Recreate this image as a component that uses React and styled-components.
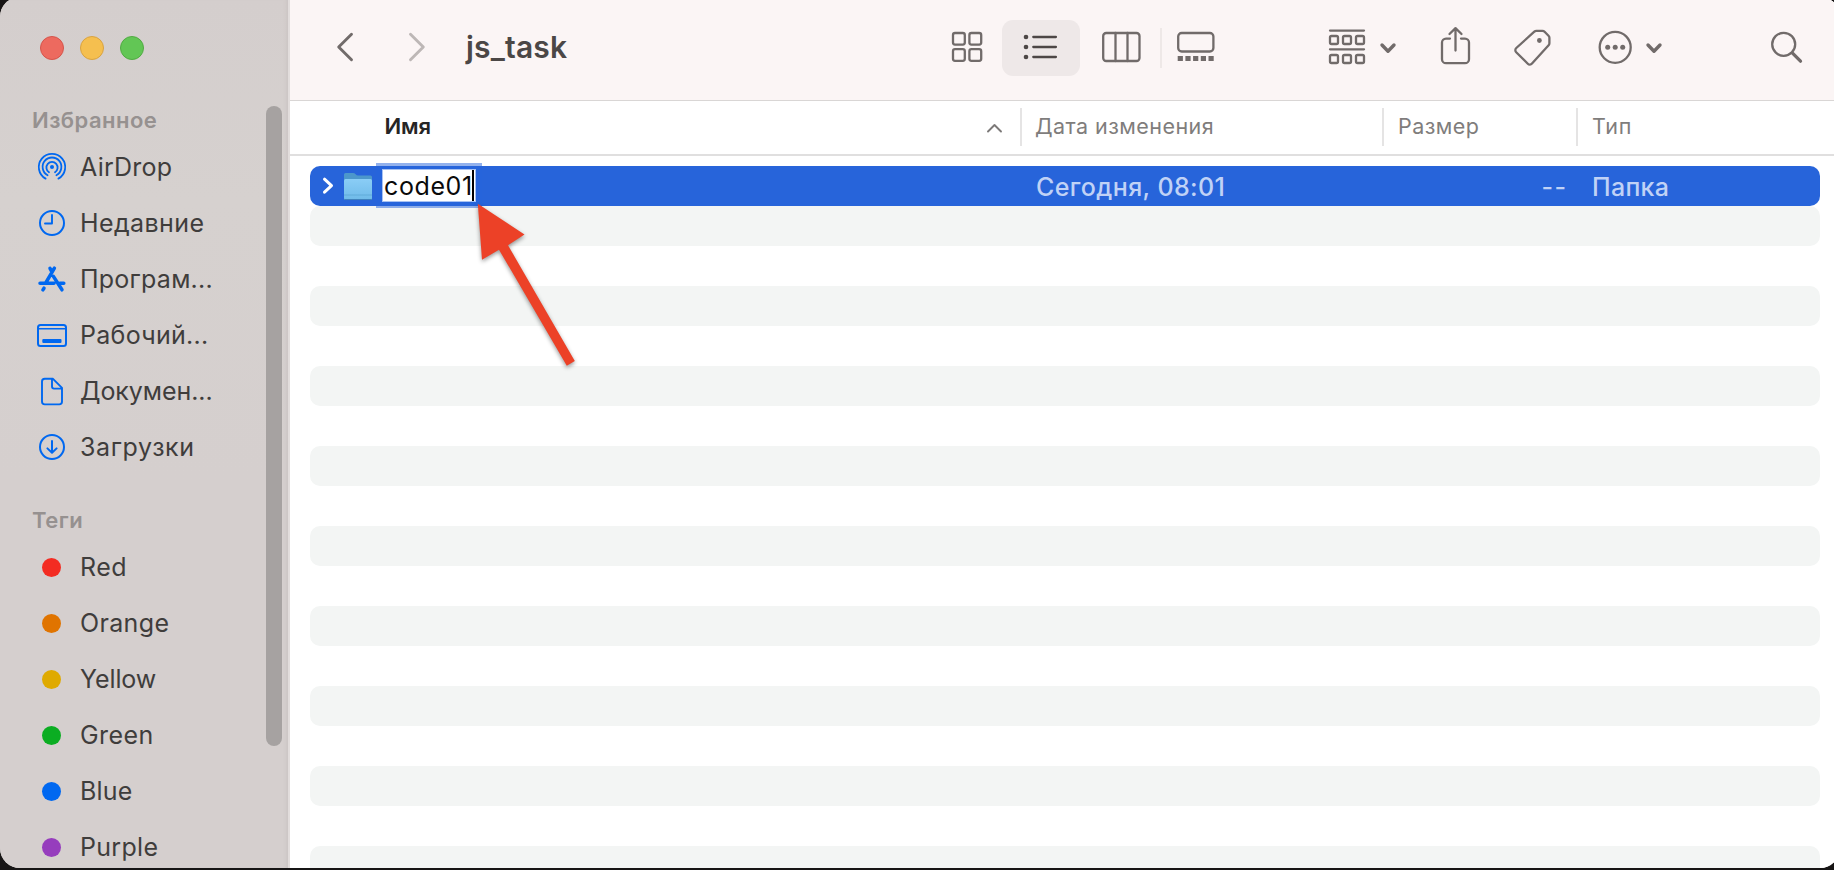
import React from 'react';
import styled, { createGlobalStyle } from 'styled-components';

const GlobalStyle = createGlobalStyle`
  * { box-sizing: border-box; }
  body { margin: 0; background: #171515; overflow: hidden; }
`;

const Desktop = styled.div`
  height: 870px;
  overflow: hidden;
  background: #171515;
  font-family: Inter, 'Liberation Sans', sans-serif;
`;

const Window = styled.div`
  display: flex;
  width: 1840px;
  height: 871px;
  margin-top: -3px;
  padding-top: 3px;
  border-radius: 20px;
  overflow: hidden;
  background: linear-gradient(90deg, #d5cfce 290px, #fbf5f5 290px);
`;

/* Sidebar */

const Sidebar = styled.aside`
  display: flex;
  justify-content: space-between;
  flex: 0 0 290px;
  height: 868px;
  overflow: hidden;
  background: linear-gradient(180deg, #d4cecd 0, #d6d1cf 200px, #d5cfce 480px, #d5cfce 100%);
  border-right: 2px solid #e2dddc;
  box-shadow: inset -4px 0 3px -2px #ccc6c5;
`;

const SidebarContent = styled.div`
  display: flex;
  flex-direction: column;
  width: 226px;
`;

const TrafficLights = styled.div`
  display: flex;
  gap: 16px;
  padding: 36px 0 41px 40px;
`;

const Light = styled.span`
  width: 24px;
  height: 24px;
  border-radius: 50%;
  background: ${(p) => p.$fill};
  border: 1px solid ${(p) => p.$edge};
`;

const Section = styled.section`
  display: flex;
  flex-direction: column;
  margin-bottom: 26px;
`;

const SectionTitle = styled.h2`
  margin: 0;
  padding-left: 32px;
  font-size: 22px;
  font-weight: 600;
  line-height: 38px;
  letter-spacing: 0.45px;
  color: #969190;
`;

const SidebarItem = styled.div`
  display: flex;
  align-items: center;
  height: 56px;
  padding-left: 32px;
  font-size: 25px;
  letter-spacing: ${(p) => p.$track}px;
  color: #3f3d3c;
  white-space: nowrap;
`;

const SidebarIcon = styled.svg`
  flex: none;
  width: 40px;
  height: 40px;
  margin-right: 8px;
  fill: none;
  stroke: #0068f0;
  stroke-width: 2;
  stroke-linecap: round;
  stroke-linejoin: round;
`;

const TagDot = styled.span`
  flex: none;
  width: 19px;
  height: 19px;
  margin: 0 19px 0 10px;
  border-radius: 50%;
  background: ${(p) => p.$color};
`;

const Scrollbar = styled.div`
  width: 16px;
  height: 640px;
  margin: 106px 6px 0 0;
  border-radius: 8px;
  background: #a6a2a1;
`;

/* Main pane */

const Main = styled.main`
  display: flex;
  flex-direction: column;
  flex: 1;
  height: 868px;
  overflow: hidden;
  background: #fff;
`;

const Toolbar = styled.header`
  display: flex;
  align-items: center;
  flex: 0 0 101px;
  background: #fbf5f5;
  border-bottom: 1px solid #d9d6d5;
`;

const NavButtons = styled.div`
  display: flex;
  gap: 40px;
  margin-left: 39px;
`;

const Title = styled.h1`
  width: 458px;
  margin: -6px 0 0 33px;
  font-size: 30px;
  font-weight: 600;
  letter-spacing: 0.2px;
  color: #4b4746;
`;

const ViewSwitch = styled.div`
  display: flex;
  align-items: center;
`;

const ViewButton = styled.div`
  display: flex;
  align-items: center;
  justify-content: center;
  width: 78px;
  height: 56px;
  margin-top: -4px;
  border-radius: 11px;
  background: ${(p) => (p.$selected ? '#eee8e8' : 'transparent')};
`;

const Separator = styled.div`
  width: 2px;
  height: 40px;
  margin: -4px 0 0 2px;
  background: #eee8e7;
`;

const Actions = styled.div`
  display: flex;
  align-items: center;
  margin-left: 89px;
`;

const Action = styled.div`
  display: flex;
  flex: none;
  gap: ${(p) => p.$gap || 0}px;
  width: ${(p) => p.$width}px;
`;

const Glyph = styled.svg`
  display: block;
  flex: none;
  width: ${(p) => p.$w}px;
  height: 50px;
  overflow: visible;
  fill: none;
  stroke: ${(p) => p.$color || '#716b6a'};
  stroke-width: 2.3;
  stroke-linecap: round;
  stroke-linejoin: round;
`;

const ListHeader = styled.div`
  display: grid;
  grid-template-columns: 730px 362px 194px 1fr;
  align-items: center;
  flex: 0 0 55px;
  border-bottom: 2px solid #e0dfdf;
  font-size: 21.5px;
  color: #7f7d7c;
`;

const NameHeading = styled.div`
  display: flex;
  align-items: center;
  justify-content: space-between;
  padding: 0 17px 3px 94.5px;
  font-size: 22px;
  font-weight: 600;
  letter-spacing: -0.1px;
  color: #262525;
`;

const Heading = styled.div`
  display: flex;
  align-items: center;
  height: 38px;
  margin-top: -1px;
  padding: 0 0 3px ${(p) => p.$left}px;
  border-left: 2px solid #e5e4e4;
  letter-spacing: ${(p) => p.$track}px;
`;

const SortCaret = styled.svg`
  width: 17px;
  height: 12px;
  margin-top: 4px;
  fill: none;
  stroke: #7c7978;
  stroke-width: 1.9;
  stroke-linecap: round;
  stroke-linejoin: round;
`;

const Rows = styled.div`
  display: flex;
  flex-direction: column;
  padding: 10px 20px 0;
`;

const Row = styled.div`
  flex: 0 0 40px;
  border-radius: 10px;
  background: ${(p) => (p.$striped ? '#f3f5f4' : 'transparent')};
`;

const SelectedRow = styled(Row)`
  display: grid;
  grid-template-columns: 710px 362px 194px 1fr;
  align-items: center;
  background: #2764da;
  color: #c0d2f6;
  font-size: 25px;
`;

const NameCell = styled.div`
  display: flex;
  align-items: center;
  height: 40px;
`;

const RowIcon = styled.svg`
  flex: none;
  width: ${(p) => p.$w}px;
  height: 40px;
`;

const NameField = styled.div`
  position: relative;
  display: flex;
  align-items: center;
  width: 94px;
  height: 33px;
  margin-top: -1px;
  padding-left: 1px;
  border: 1px solid #a8c2f2;
  background: #fff;
  box-shadow: 0 0 0 6px rgba(37, 99, 220, 0.5);
  color: #0a0a0a;
  letter-spacing: 0.6px;
`;

const Caret = styled.span`
  position: absolute;
  right: 1px;
  top: 0;
  width: 2px;
  height: 31px;
  background: #000;
`;

const Cell = styled.div`
  padding: 1px ${(p) => p.$right || 0}px 0 ${(p) => p.$left || 0}px;
  text-align: ${(p) => (p.$right ? 'right' : 'left')};
  font-weight: 450;
  letter-spacing: ${(p) => p.$track}px;
`;

const PointerArrow = styled.svg`
  position: absolute;
  left: 470px;
  top: 196px;
  width: 120px;
  height: 184px;
  filter: drop-shadow(0 2px 2px rgba(0, 0, 0, 0.4));
`;

const places = [
  {
    label: 'AirDrop', track: 0.25,
    icon: (
      <>
        <circle cx="20" cy="20" r="2" fill="#0068f0" stroke="none" />
        <path d="M17 25.2A5.6 5.6 0 1 1 23 25.2M15.6 28.2A9.4 9.4 0 1 1 24.4 28.2M13.6 31.6A13.2 13.2 0 1 1 26.4 31.6" strokeWidth="1.8" />
      </>
    ),
  },
  {
    label: 'Недавние', track: 0.42,
    icon: (
      <>
        <circle cx="20" cy="20" r="12" />
        <path d="M20 12v8.5h-7" strokeWidth="1.9" />
      </>
    ),
  },
  {
    label: 'Програм...', track: 0.23,
    icon: (
      <path d="M18 9.4L19.800 12.600M22.400 9.200L13.700 24M8 24.200H22M21.400 17.400L30 30.800M27.800 24.200H31.800M12 29.200L10.900 30.900" strokeWidth="3.5" />
    ),
  },
  {
    label: 'Рабочий...', track: 0.28,
    icon: (
      <>
        <rect x="6" y="10" width="28" height="21" rx="2.5" />
        <path d="M6 13.7h28" strokeWidth="1.6" />
        <rect x="10.3" y="24" width="19.2" height="4" rx="1" fill="#0068f0" stroke="none" />
      </>
    ),
  },
  {
    label: 'Докумен...', track: -0.07,
    icon: (
      <path d="M12.8 7.8h8.2l9 9v13.8a2.8 2.8 0 0 1-2.8 2.8H12.8a2.8 2.8 0 0 1-2.8-2.8V10.6a2.8 2.8 0 0 1 2.8-2.8zM20 8v7.6a2 2 0 0 0 2 2h7.6" strokeWidth="1.9" />
    ),
  },
  {
    label: 'Загрузки', track: 0.6,
    icon: (
      <>
        <circle cx="20" cy="20" r="12" />
        <path d="M20 14v11.5M15.4 21.4l4.6 4.4 4.6-4.4" />
      </>
    ),
  },
];

const tags = [
  ['Red', '#f32c22', 0.5],
  ['Orange', '#e07400', 0.35],
  ['Yellow', '#dfaa00', -0.1],
  ['Green', '#0bad22', 0.4],
  ['Blue', '#0068f0', 0.2],
  ['Purple', '#963dbd', 0.3],
];

const ChevronDown = () => (
  <Glyph $w={18} viewBox="0 25 18 50">
    <path d="M3 45l6 6.2 6-6.2" strokeWidth="3.4" />
  </Glyph>
);

export default function App() {
  return (
    <Desktop>
      <GlobalStyle />
      <Window>
        <Sidebar>
          <SidebarContent>
            <TrafficLights>
              <Light $fill="#ed6a5f" $edge="#d5554b" />
              <Light $fill="#f5bf4f" $edge="#d9a341" />
              <Light $fill="#62c655" $edge="#51ab43" />
            </TrafficLights>
            <Section>
              <SectionTitle>Избранное</SectionTitle>
              {places.map((p) => (
                <SidebarItem key={p.label} $track={p.track}>
                  <SidebarIcon viewBox="0 0 40 40">{p.icon}</SidebarIcon>
                  {p.label}
                </SidebarItem>
              ))}
            </Section>
            <Section>
              <SectionTitle>Теги</SectionTitle>
              {tags.map(([label, color, track]) => (
                <SidebarItem key={label} $track={track}>
                  <TagDot $color={color} />
                  {label}
                </SidebarItem>
              ))}
            </Section>
          </SidebarContent>
          <Scrollbar />
        </Sidebar>

        <Main>
          <Toolbar>
            <NavButtons>
              <Glyph $w={32} viewBox="329 25 32 50">
                <path d="M351.5 34.3L338.7 47l12.8 12.7" strokeWidth="2.9" />
              </Glyph>
              <Glyph $w={32} $color="#bdb7b6" viewBox="401 25 32 50">
                <path d="M410.5 34.3L423.3 47l-12.8 12.7" strokeWidth="2.9" />
              </Glyph>
            </NavButtons>
            <Title>js_task</Title>
            <ViewSwitch>
              <ViewButton>
                <Glyph $w={32} viewBox="947 23 32 50">
                  <rect x="953" y="33" width="11.8" height="11.600" rx="2" />
                  <rect x="969.4" y="33" width="11.8" height="11.600" rx="2" />
                  <rect x="953" y="49.2" width="11.8" height="11.600" rx="2" />
                  <rect x="969.4" y="49.2" width="11.8" height="11.600" rx="2" />
                </Glyph>
              </ViewButton>
              <ViewButton $selected>
                <Glyph $w={34} $color="#4d4746" viewBox="1024 23 34 50">
                  <path d="M1033.3 37h22.6M1033.3 47h22.6M1033.3 57h22.6" />
                  <g fill="#4d4746" stroke="none">
                    <circle cx="1026" cy="37" r="2.3" />
                    <circle cx="1026" cy="47" r="2.3" />
                    <circle cx="1026" cy="57" r="2.3" />
                  </g>
                </Glyph>
              </ViewButton>
              <ViewButton>
                <Glyph $w={38} viewBox="1100 23 38 50">
                  <rect x="1103.2" y="33" width="36.3" height="28" rx="3" />
                  <path d="M1115.5 33v28M1127.5 33v28" />
                </Glyph>
              </ViewButton>
              <Separator />
              <ViewButton>
                <Glyph $w={38} viewBox="1182 23 38 50">
                  <rect x="1178.2" y="33" width="35.2" height="18.5" rx="3.5" />
                  <path d="M1177.700 58.5h5.2m2.5 0h5.2m2.5 0h5.2m2.5 0h5.2m2.5 0h5.2" strokeWidth="5" strokeLinecap="butt" />
                </Glyph>
              </ViewButton>
            </ViewSwitch>
            <Actions>
              <Action $width={111} $gap={14}>
                <Glyph $w={36} viewBox="1329 25 36 50">
                  <path d="M1330 30.6h34M1330 49.3h34" />
                  {[1330, 1343, 1356].map((x) => (
                    <g key={x}>
                      <rect x={x} y="36" width="8" height="8" rx="1.5" />
                      <rect x={x} y="55" width="8" height="8" rx="1.5" />
                    </g>
                  ))}
                </Glyph>
                <ChevronDown />
              </Action>
              <Action $width={73}>
                <Glyph $w={30} viewBox="1440 25 30 50">
                  <path d="M1450 38.6h-4a4 4 0 0 0-4 4v16.6a4 4 0 0 0 4 4h19a4 4 0 0 0 4-4V42.6a4 4 0 0 0-4-4h-4M1455.5 50.5V28.5M1449.5 34l6-5.8 6 5.8" />
                </Glyph>
              </Action>
              <Action $width={84.5}>
                <Glyph $w={38} viewBox="1513 25 38 50">
                  <path d="M1536.5 30.9h6a3 3 0 0 1 2.1.9l3.900 3.900a3 3 0 0 1 .9 2.100v5.400a3 3 0 0 1-.8 2.100l-16.600 18.300a2.900 2.900 0 0 1-4.200.1l-11.600-11.500a2.900 2.900 0 0 1 .1-4.200l18-16.300a3.200 3.200 0 0 1 2.200-.8z" />
                  <circle cx="1539.400" cy="40.500" r="2.400" fill="#716b6a" stroke="none" />
                </Glyph>
              </Action>
              <Action $width={172.5} $gap={11.5}>
                <Glyph $w={36} viewBox="1597.5 25 36 50">
                  <circle cx="1614.7" cy="47.3" r="15.5" />
                  <g fill="#716b6a" stroke="none">
                    <circle cx="1607.2" cy="47.3" r="2.5" />
                    <circle cx="1614.7" cy="47.3" r="2.5" />
                    <circle cx="1622.2" cy="47.3" r="2.5" />
                  </g>
                </Glyph>
                <ChevronDown />
              </Action>
              <Action $width={34}>
                <Glyph $w={34} viewBox="1770 25 34 50">
                  <circle cx="1783.7" cy="44.3" r="11.5" />
                  <path d="M1792.5 53.2l8 8" strokeWidth="3.3" />
                </Glyph>
              </Action>
            </Actions>
          </Toolbar>

          <ListHeader>
            <NameHeading>
              Имя
              <SortCaret viewBox="0 0 17 12">
                <path d="M2 9.5L8.5 3l6.500 6.500" />
              </SortCaret>
            </NameHeading>
            <Heading $left={13} $track={0.45}>Дата изменения</Heading>
            <Heading $left={14} $track={0.44}>Размер</Heading>
            <Heading $left={14} $track={0.7}>Тип</Heading>
          </ListHeader>

          <Rows>
            <SelectedRow>
              <NameCell>
                <RowIcon $w={32} viewBox="310 166 32 40" fill="none">
                  <path d="M324.5 179.2l7 6.5-7 6.5" stroke="#fff" strokeWidth="3" strokeLinecap="round" strokeLinejoin="round" />
                </RowIcon>
                <RowIcon $w={40} viewBox="342 166 40 40">
                  <defs>
                    <linearGradient id="folder" x1="0" y1="0" x2="0" y2="1">
                      <stop offset="0" stopColor="#8acdf6" />
                      <stop offset="1" stopColor="#70bbe9" />
                    </linearGradient>
                  </defs>
                  <path d="M344 199.5v-25a1.5 1.5 0 0 1 1.5-1.5h7.5q1.5 0 2.6 1.2t2.6 1.3h12.3a1.5 1.5 0 0 1 1.5 1.5v22.5z" fill="#4c97cb" />
                  <path d="M344 180.5a1.500 1.500 0 0 1 1.500-1.500h25a1.500 1.500 0 0 1 1.500 1.500v17.500a1.500 1.500 0 0 1-1.500 1.500h-25a1.500 1.500 0 0 1-1.500-1.500z" fill="url(#folder)" />
                  <path d="M344 195h28" stroke="#5ca7d6" strokeWidth="0.8" />
                  <path d="M344.5 199.6h27" stroke="#3c7cb4" strokeWidth="0.9" />
                </RowIcon>
                <NameField>
                  code01
                  <Caret />
                </NameField>
              </NameCell>
              <Cell $left={16} $track={0.4}>Сегодня, 08:01</Cell>
              <Cell $right={8.5} $track={1.5}>--</Cell>
              <Cell $left={16} $track={0.3}>Папка</Cell>
            </SelectedRow>
            {Array.from({ length: 17 }, (_, i) => (
              <Row key={i} $striped={i % 2 === 0} />
            ))}
          </Rows>
        </Main>
      </Window>
      <PointerArrow viewBox="470 196 120 184">
        <path d="M477.8 203.8L524.5 234.4 508 245.2 574.8 361 566.8 365.7 499 249.7 482 259.7z" fill="#ec4127" />
      </PointerArrow>
    </Desktop>
  );
}
